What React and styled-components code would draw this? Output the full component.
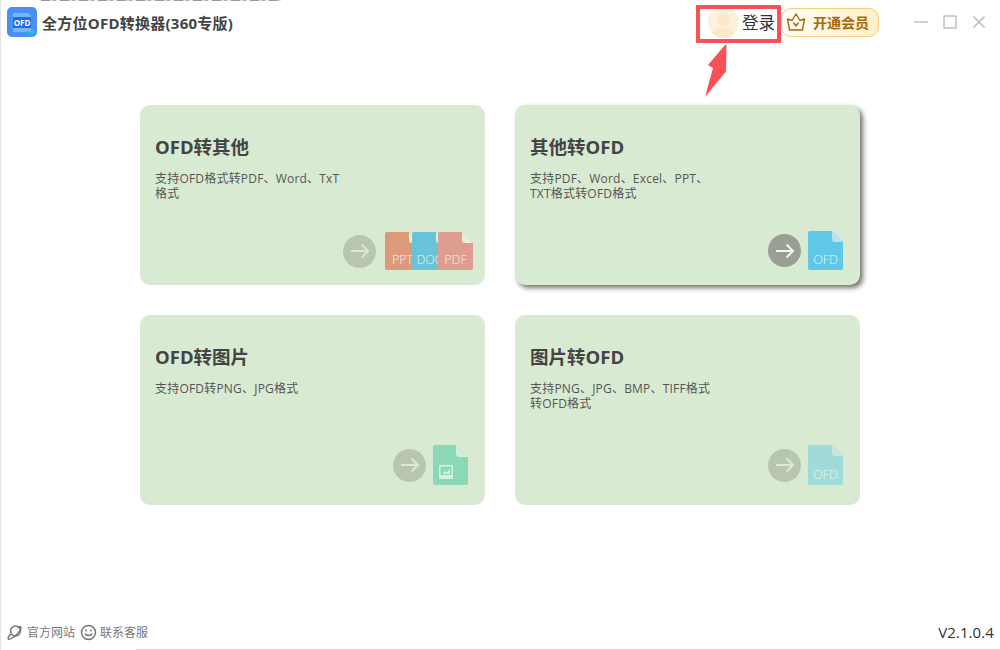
import React from "react"
import styled, { createGlobalStyle } from "styled-components"

const GlobalStyle = createGlobalStyle`
  html, body {
    margin: 0;
    padding: 0;
    background: #fff;
    overflow: hidden;
  }
  body {
    font-family: "Open Sans", "Noto Sans CJK SC", sans-serif;
  }
`

const Window = styled.div`
  position: relative;
  width: 1000px;
  height: 650px;
  box-sizing: border-box;
  display: flex;
  flex-direction: column;
  background: #fff;
  border-left: 1px solid #e4e4e4;
  overflow: hidden;
`

// sliver of the window behind, cut off by the top of the screenshot
const BehindTop = styled.div`
  position: absolute;
  left: 40px;
  top: 0;
  width: 240px;
  height: 1px;
  background: repeating-linear-gradient(90deg, #999 0 9px, #ddd 9px 12px, #aaa 12px 15px, #eee 15px 19px);
`

const BehindBottom = styled.div`
  position: absolute;
  left: 135px;
  right: 0;
  bottom: 0;
  height: 1px;
  background: #d2d2d2;
`

const TitleBar = styled.header`
  height: 44px;
  flex: none;
  display: flex;
  align-items: center;
  padding: 0 14px 0 6px;
`

const AppName = styled.h1`
  margin: 0 0 0 5px;
  font-size: 15px;
  letter-spacing: 0.25px;
  font-weight: 700;
  color: #444;
  white-space: nowrap;
`

const UserArea = styled.div`
  margin-left: auto;
  display: flex;
  align-items: center;
`

const Avatar = styled.div`
  width: 31px;
  height: 31px;
  border-radius: 50%;
  overflow: hidden;
  background: #fdf1e0;
`

const LoginText = styled.span`
  margin-left: 3px;
  font-size: 16.5px;
  color: #333;
`

const VipButton = styled.div`
  margin-left: 6px;
  width: 98px;
  height: 29px;
  box-sizing: border-box;
  display: flex;
  align-items: center;
  gap: 6px;
  padding-left: 3px;
  border: 1px solid #f6cd7c;
  border-radius: 10px;
  background: linear-gradient(90deg, #fffdf6, #fff0c8);
  color: #a8660c;
  font-size: 14px;
  font-weight: 700;
  white-space: nowrap;
`

const WinButtons = styled.div`
  margin-left: 35px;
  display: flex;
  align-items: center;
  gap: 15px;
`

const Main = styled.main`
  flex: 1;
  padding: 61px 0 0 139px;
`

const Grid = styled.div`
  display: grid;
  grid-template-columns: 345px 345px;
  grid-template-rows: 180px 190px;
  gap: 30px;
`

const Card = styled.section`
  box-sizing: border-box;
  display: flex;
  flex-direction: column;
  padding: 30px 12px 15px 15px;
  border-radius: 10px;
  background: #d9ead3;
  box-shadow: ${(p) => (p.$active ? "3px 3px 5px rgba(70, 70, 60, 0.75)" : "none")};
`

const CardTitle = styled.h2`
  margin: 0;
  font-size: 18.5px;
  line-height: 24px;
  font-weight: 700;
  color: #444;
`

const CardText = styled.p`
  margin: 12px 0 0;
  font-size: 12px;
  letter-spacing: 0.2px;
  line-height: 15px;
  color: #555;
  white-space: nowrap;
`

const CardActions = styled.div`
  margin-top: auto;
  margin-bottom: ${(p) => p.$lift || 0}px;
  display: flex;
  align-items: center;
  justify-content: flex-end;
  padding-right: ${(p) => p.$inset || 0}px;
`

const ArrowCircle = styled.div`
  width: 33px;
  height: 33px;
  margin-right: ${(p) => p.$gap}px;
  display: flex;
  align-items: center;
  justify-content: center;
  border-radius: 50%;
  background: ${(p) => (p.$active ? "#9a9e94" : "#b8c6b1")};
`

const FileStack = styled.div`
  display: flex;
  svg + svg {
    margin-left: -8.5px;
  }
`

const Footer = styled.footer`
  height: 32px;
  flex: none;
  display: flex;
  align-items: center;
  padding: 0 6px 2px 5px;
  font-size: 12px;
  color: #777;
`

const FooterLink = styled.span`
  display: flex;
  align-items: center;
  gap: 3px;
  margin-right: 5px;
`

const Version = styled.span`
  margin-left: auto;
  font-size: 15px;
  letter-spacing: 0.1px;
  color: #333;
`

const Highlight = styled.div`
  position: absolute;
  left: 695px;
  top: 5px;
  width: 85px;
  height: 38px;
  box-sizing: border-box;
  border: 4px solid #fb5156;
  border-radius: 1px;
`

const Pointer = styled.svg`
  position: absolute;
  left: 699px;
  top: 42px;
`

const Logo = () => (
  <svg width="30" height="30" viewBox="0 0 30 30">
    <rect width="30" height="30" rx="5" fill="#4a90f4" />
    <path d="M6 6h15l3 3v16H6z" fill="#7db2f8" />
    <rect x="6" y="10" width="18" height="11" fill="#1c6ee8" />
    <text x="15" y="18.5" textAnchor="middle" fontSize="8" fontWeight="700" fill="#fff" fontFamily="Open Sans">OFD</text>
    <path d="M19 25h8M24 22l3 3-3 3" stroke="#25c7d8" strokeWidth="1.6" fill="none" />
  </svg>
)

const AvatarFigure = () => (
  <svg width="31" height="31" viewBox="0 0 31 31">
    <circle cx="15.5" cy="12.5" r="6.5" fill="#fee9c6" />
    <path d="M3 31c0-8 6-10.500 12.500-10.500S28 23 28 31z" fill="#fee9c6" />
  </svg>
)

const Crown = () => (
  <svg width="22" height="22" viewBox="0 0 22 22" fill="none" stroke="#a8660c" strokeWidth="1.4" strokeLinejoin="round">
    <path d="M2.500 8l4.500 1.500L11 3l4 6.500L19.500 8 17.500 19h-13z" />
    <path d="M8.500 11.500l2.500 3.500 2.500-3.500" />
  </svg>
)

const WinIcons = () => (
  <WinButtons>
    <svg width="14" height="14" viewBox="0 0 14 14" stroke="#bdbdbd" strokeWidth="1.4">
      <path d="M0 7h14" />
    </svg>
    <svg width="14" height="14" viewBox="0 0 14 14" fill="none" stroke="#bdbdbd" strokeWidth="1.4">
      <rect x="1" y="1" width="12" height="12" />
    </svg>
    <svg width="14" height="14" viewBox="0 0 14 14" stroke="#bdbdbd" strokeWidth="1.6">
      <path d="M1.500 1.500l11 11M12.500 1.500l-11 11" />
    </svg>
  </WinButtons>
)

const Arrow = ({ color }) => (
  <svg width="20" height="16" viewBox="0 0 20 16" fill="none" stroke={color} strokeWidth="2">
    <path d="M1 8h17M11.500 1.500L18 8l-6.500 6.500" />
  </svg>
)

const FileIcon = ({ color, fold, label, height = 38 }) => (
  <svg width="35" height={height} viewBox={`0 0 35 ${height}`}>
    <path d={`M2 0H24L35 11V${height - 2}a2 2 0 0 1-2 2H2a2 2 0 0 1-2-2V2a2 2 0 0 1 2-2z`} fill={color} />
    <path d="M24 0L35 11H27a3 3 0 0 1-3-3z" fill={fold} />
    <text x="17.5" y={height - 6} textAnchor="middle" fontSize="12.5" fontWeight="300" fill="#eef6ee" fontFamily="Open Sans">
      {label}
    </text>
  </svg>
)

const ImageFile = () => (
  <svg width="35" height="40" viewBox="0 0 35 40">
    <path d="M2 0H23L35 12V38a2 2 0 0 1-2 2H2a2 2 0 0 1-2-2V2a2 2 0 0 1 2-2z" fill="#8ad8b8" />
    <path d="M23 0L35 12H26a3 3 0 0 1-3-3z" fill="#d2ecd8" />
    <rect x="6" y="20" width="14" height="14" fill="#d9eedd" />
    <rect x="7.500" y="21.500" width="11" height="8.500" fill="#8ad8b8" />
    <path d="M9 29l3-3 2 1.500 3-4v5.500z" fill="#d9eedd" />
  </svg>
)

const PlanetIcon = () => (
  <svg width="18" height="18" viewBox="0 0 18 18" fill="none" stroke="#777" strokeWidth="1.5">
    <circle cx="9.500" cy="8" r="5" />
    <path d="M5 11c-2.500 2.500-3.500 4.500-2.500 5s4-1 7-3.500 6-6.500 5.500-8c-.3-1-2-.8-3.500 0" />
  </svg>
)

const SmileIcon = () => (
  <svg width="17" height="17" viewBox="0 0 17 17" fill="none" stroke="#777" strokeWidth="1.5">
    <circle cx="8.500" cy="8.500" r="7" />
    <path d="M5 9.500c.8 2.500 6.200 2.500 7 0" />
    <path d="M6 5.500v2M11 5.500v2" />
  </svg>
)

export default function App() {
  return (
    <>
      <GlobalStyle />
      <Window>
        <BehindTop />
        <TitleBar>
          <Logo />
          <AppName>全方位OFD转换器(360专版)</AppName>
          <UserArea>
            <Avatar>
              <AvatarFigure />
            </Avatar>
            <LoginText>登录</LoginText>
            <VipButton>
              <Crown />
              开通会员
            </VipButton>
            <WinIcons />
          </UserArea>
        </TitleBar>

        <Main>
          <Grid>
            <Card>
              <CardTitle>OFD转其他</CardTitle>
              <CardText>
                支持OFD格式转PDF、Word、TxT
                <br />
                格式
              </CardText>
              <CardActions>
                <ArrowCircle $gap={9}>
                  <Arrow color="#d9ead3" />
                </ArrowCircle>
                <FileStack>
                  <FileIcon color="#dd9a78" fold="#e6eedd" label="PPT" />
                  <FileIcon color="#69c3d9" fold="#e6eedd" label="DOC" />
                  <FileIcon color="#dd9d90" fold="#e6eedd" label="PDF" />
                </FileStack>
              </CardActions>
            </Card>

            <Card $active>
              <CardTitle>其他转OFD</CardTitle>
              <CardText>
                支持PDF、Word、Excel、PPT、
                <br />
                TXT格式转OFD格式
              </CardText>
              <CardActions $inset={5}>
                <ArrowCircle $active $gap={7}>
                  <Arrow color="#f2f5ee" />
                </ArrowCircle>
                <FileIcon color="#5fc8e6" fold="#b5e3ee" label="OFD" height={39} />
              </CardActions>
            </Card>

            <Card>
              <CardTitle>OFD转图片</CardTitle>
              <CardText>支持OFD转PNG、JPG格式</CardText>
              <CardActions $inset={5} $lift={5}>
                <ArrowCircle $gap={7}>
                  <Arrow color="#d9ead3" />
                </ArrowCircle>
                <ImageFile />
              </CardActions>
            </Card>

            <Card>
              <CardTitle>图片转OFD</CardTitle>
              <CardText>
                支持PNG、JPG、BMP、TIFF格式
                <br />
                转OFD格式
              </CardText>
              <CardActions $inset={5} $lift={5}>
                <ArrowCircle $gap={7}>
                  <Arrow color="#d9ead3" />
                </ArrowCircle>
                <FileIcon color="#a0dadb" fold="#c8e6dd" label="OFD" height={40} />
              </CardActions>
            </Card>
          </Grid>
        </Main>

        <Footer>
          <FooterLink>
            <PlanetIcon />
            官方网站
          </FooterLink>
          <FooterLink>
            <SmileIcon />
            联系客服
          </FooterLink>
          <Version>V2.1.0.4</Version>
        </Footer>

        <Highlight />
        <Pointer width="30" height="58" viewBox="0 0 30 58">
          <path d="M25 3L8 23 13 26 5 55 26 29.500 26.500 3z" fill="#fb5156" />
        </Pointer>
        <BehindBottom />
      </Window>
    </>
  )
}
